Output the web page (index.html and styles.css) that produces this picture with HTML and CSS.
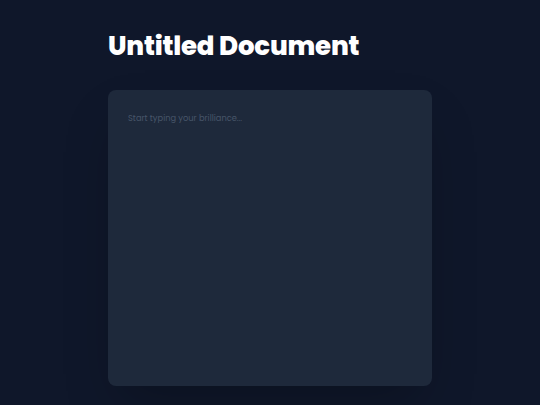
FILE: index.html
```html
<!DOCTYPE html>
<html lang="en">
<head>
<meta charset="utf-8">
<title>Untitled Document</title>
<link rel="stylesheet" href="styles.css">
</head>
<body>
<main class="page">
  <h1 class="title">Untitled Document</h1>
  <div class="editor">
    <div class="placeholder">Start typing your brilliance...</div>
  </div>
</main>
</body>
</html>
```
FILE: styles.css
```css
html, body {
  margin: 0;
  padding: 0;
  background: #0f172a;
  height: 100%;
}
body {
  font-family: "Poppins", "Open Sans", "Noto Sans", sans-serif;
  color: #ffffff;
}
.page {
  width: 324px;
  margin: 0 auto;
  padding-top: 30px;
  display: flex;
  flex-direction: column;
}
.title {
  margin: 0;
  font-size: 26px;
  font-weight: 800;
  line-height: 32px;
  letter-spacing: -0.2px;
  color: #ffffff;
}
.editor {
  margin-top: 28px;
  height: 296px;
  background: #1e293b;
  border-radius: 8px;
  box-shadow: 0 25px 50px -12px rgba(0, 0, 0, 0.25);
  padding: 22px 20px;
  box-sizing: border-box;
}
.placeholder {
  font-size: 8.3px;
  line-height: 12px;
  color: #475569;
}
```
